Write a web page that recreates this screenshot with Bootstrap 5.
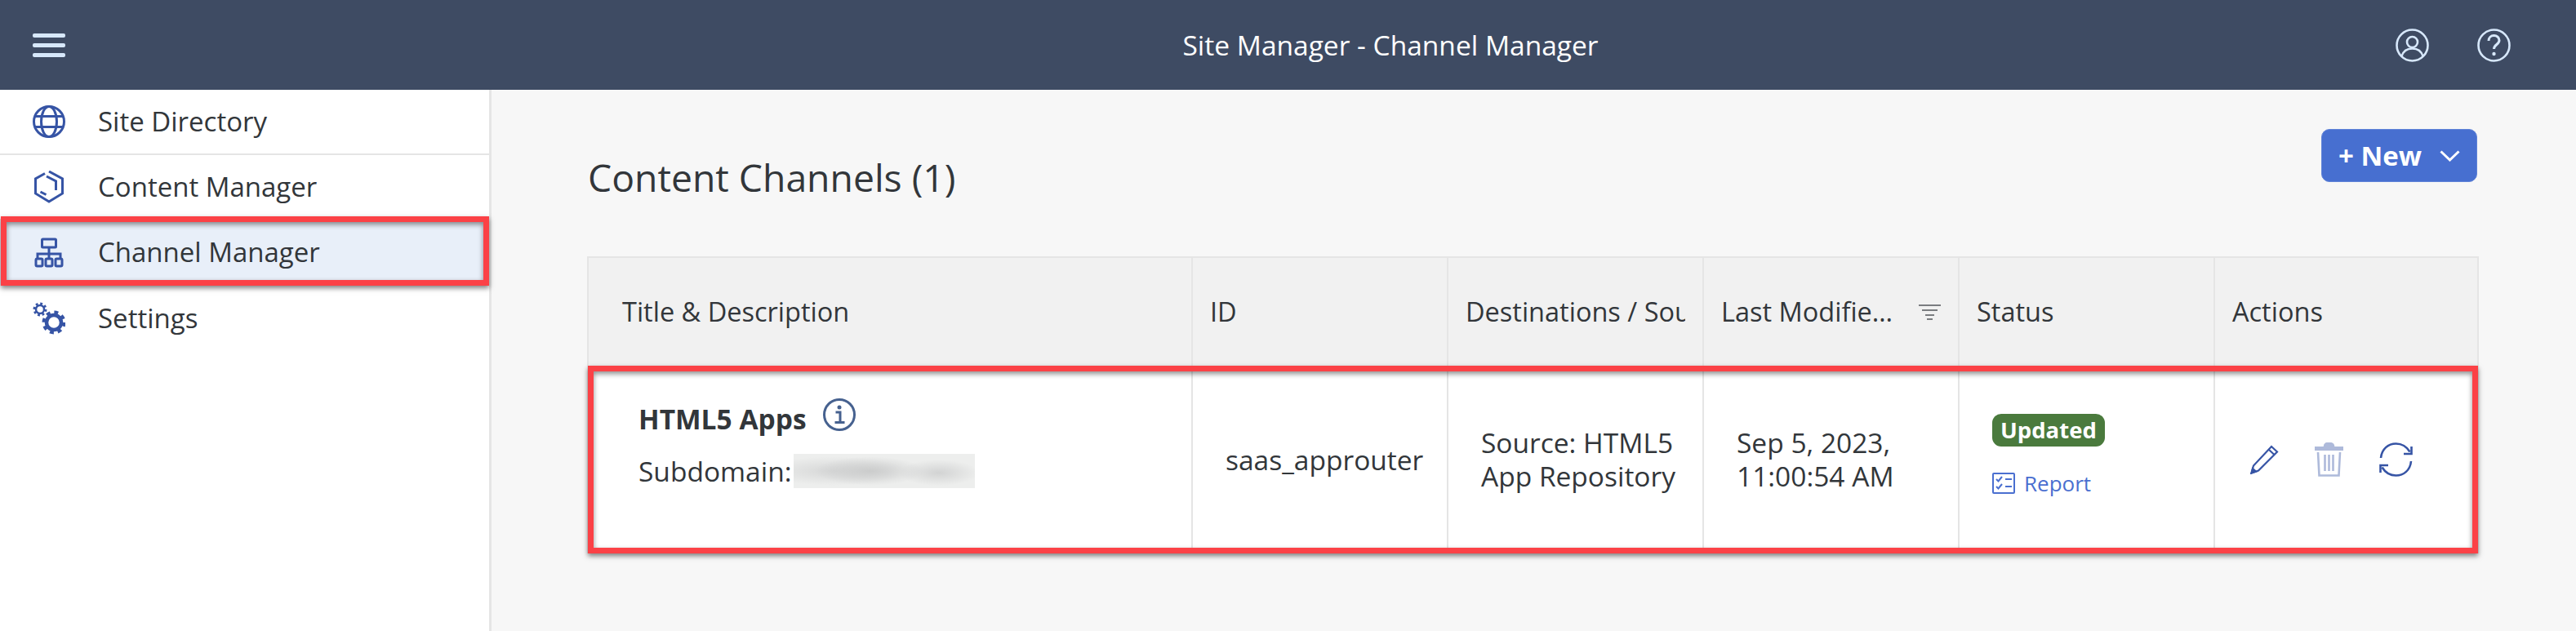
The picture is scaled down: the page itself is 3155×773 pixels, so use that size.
<!DOCTYPE html>
<html lang="en">
<head>
  <meta charset="UTF-8">
  <meta name="viewport" content="width=device-width, initial-scale=1.0">
  <title>Site Manager - Channel Manager</title>
  <link href="https://cdn.jsdelivr.net/npm/bootstrap@5.3.0/dist/css/bootstrap.min.css" rel="stylesheet">
  <style>
    html, body { height: 100%; }
    body { background: #f7f7f7; color: #32363a; font-family: "Open Sans", "Liberation Sans", sans-serif; font-size: 33px; overflow: hidden; }
    .shell-bar { height: 110px; background: #3e4b63; padding: 0; color: #fff; flex-wrap: nowrap; }
    .shell-left { width: 600px; padding-left: 40px; }
    .shell-right { width: 349px; padding-right: 80px; gap: 59px; }
    .shell-title { font-size: 33.500px; color: #fff; }
    .shell-bar svg { display: block; }
    .page-body { height: 663px; }
    .side-nav { width: 602px; flex: none; background: #fff; border-right: 3px solid #e5e5e5; }
    .side-nav .list-group-item { height: 80px; padding: 0 0 0 40px; gap: 40px; border: 0; border-bottom: 2px solid #e5e5e5; border-radius: 0; color: #32363a; background: #fff; font-size: 33px; }
    .side-nav .list-group-item.active { background: #e8eff9; color: #32363a; margin: 0; position: relative; border-bottom-color: #e8eff9; }
    .side-nav .list-group-item.active::after { content: ""; position: absolute; left: 1px; right: 0; top: -5px; bottom: -2px; border: 7px solid #fb4146; box-shadow: 0 3px 6px rgba(0,0,0,.5), inset 0 3px 6px rgba(0,0,0,.45); }
    .side-nav svg { width: 40px; height: 40px; flex: none; }
    .blue-line { fill: none; stroke: #3654a5; stroke-width: 3; }
    .main-area { padding: 48px 121px 0 117px; }
    .head-row { height: 156px; }
    .page-heading { font-size: 46.300px; font-weight: 400; margin: 32px 0 0 1px; }
    .new-btn { width: 191px; height: 65px; background: #476fd0; border-color: #5f83d8; border-radius: 10px; color: #fff; font-size: 33px; font-weight: 700; padding: 0; gap: 22px; margin-right: 2px; }
    .channel-table { table-layout: fixed; width: 2315px; margin: 0; border: 2px solid #e5e5e5; border-bottom: 0; --bs-table-bg: transparent; color: #32363a; }
    .channel-table th, .channel-table td { border: 0; border-right: 2px solid #e5e5e5; }
    .channel-table th:last-child, .channel-table td:last-child { border-right: 0; }
    .channel-table thead th { height: 133px; background: #f1f1f1; font-weight: 400; font-size: 32.500px; padding: 0 21px; vertical-align: middle; white-space: nowrap; color: #32363a; }
    .channel-table thead th.head-first { padding-left: 41px; }
    .channel-table tbody td { background: #fff; height: 230px; padding: 7px 0; font-size: 33.500px; line-height: 41px; vertical-align: middle; color: #32363a; }
    .channel-table tbody tr { position: relative; }
    .channel-table tbody tr::after { content: ""; position: absolute; left: 0; right: 0; top: 0; bottom: 0; border: 7px solid #fb4146; box-shadow: 0 3px 6px rgba(0,0,0,.5), inset 0 3px 6px rgba(0,0,0,.45); pointer-events: none; }
    .w-title { width: 740px; } .w-mid { width: 313px; } .w-last { width: 323px; }
    .cell-title { padding-left: 61px !important; }
    .cell-id { padding-left: 40px !important; }
    .cell-src { padding-left: 40px !important; }
    .cell-status { padding-left: 40px !important; }
    .app-name { font-weight: 700; font-size: 33.500px; gap: 20px; margin-top: -40px; }
    .app-name svg { margin-bottom: 10px; }
    .subdomain { margin-top: 18px; gap: 2px; }
    .blur-box { width: 222px; height: 42px; background: radial-gradient(ellipse 30% 42% at 42% 50%, #cbcccc, transparent), radial-gradient(ellipse 22% 38% at 80% 55%, #d2d3d3, transparent), radial-gradient(ellipse 40% 42% at 22% 50%, #d6d7d7, transparent), #edeeed; }
    .head-clip { overflow: hidden; }
    .header-ellipsis { min-width: 0; overflow: hidden; text-overflow: ellipsis; }
    .state-tag { display: inline-block; background: #4a7a3d; border-radius: 11px; color: #fff; font-weight: 700; font-size: 27.500px; line-height: 40px; height: 40px; padding: 0 10px; position: relative; top: -12px; }
    .report-link { color: #4a6fd0; font-size: 26px; gap: 11px; margin-top: 18px; margin-bottom: 4px; text-decoration: none; line-height: 30px; }
    .act-row { padding-left: 43px; gap: 44px; }
    .act-row svg { display: block; }
    .muted-icon { opacity: .4; }
  </style>
</head>
<body>

<!-- Top bar -->
<nav class="navbar shell-bar d-flex align-items-center">
  <div class="shell-left">
    <svg width="40" height="29" viewBox="0 0 40 29" fill="#d7e8fb"><rect y="0" width="40" height="5" rx="2"/><rect y="12" width="40" height="5" rx="2"/><rect y="24" width="40" height="5" rx="2"/></svg>
  </div>
  <div class="flex-fill text-center shell-title">Site Manager - Channel Manager</div>
  <div class="shell-right d-flex justify-content-end">
    <svg width="41" height="41" viewBox="0 0 41 41" fill="none" stroke="#d7e8fb" stroke-width="2.600"><circle cx="20.500" cy="20.500" r="19"/><circle cx="20.500" cy="16.500" r="6.500"/><path d="M7.500 34c2-7 7-9.500 13-9.500s11 2.500 13 9.500"/></svg>
    <svg width="41" height="41" viewBox="0 0 41 41" fill="none" stroke="#d7e8fb" stroke-width="2.600"><circle cx="20.500" cy="20.500" r="19"/><path d="M14 15c0-4 3-6.500 6.500-6.500S27 11 27 14.500c0 5-6.500 5-6.500 10.500" stroke-width="3"/><circle cx="20.500" cy="31" r="2.200" fill="#d7e8fb" stroke="none"/></svg>
  </div>
</nav>

<div class="page-body d-flex">
  <!-- Sidebar -->
  <aside class="side-nav">
    <div class="list-group list-group-flush">
      <a class="list-group-item d-flex align-items-center" href="#">
        <svg viewBox="0 0 40 40" class="blue-line"><circle cx="20" cy="20" r="18.500"/><ellipse cx="20" cy="20" rx="9.500" ry="18.500"/><path d="M3 13.500h34M3 26.500h34"/></svg>
        <span>Site Directory</span>
      </a>
      <a class="list-group-item d-flex align-items-center" href="#">
        <svg viewBox="0 0 40 40" class="blue-line" stroke-width="2.600"><path d="M15 3.500 3.500 10v18L20 38l16.500-10V10L20 1"/><path d="M17 7l11.500 6v11"/><path d="M9.500 26l7 3.500"/></svg>
        <span>Content Manager</span>
      </a>
      <a class="list-group-item active d-flex align-items-center" href="#">
        <svg viewBox="0 0 40 40" class="blue-line"><rect x="11.500" y="4" width="17" height="10" rx="1"/><path d="M20 14v14M6 28v-6h28v6M20 22v6"/><rect x="4" y="28" width="8" height="9" rx="1.500"/><rect x="16" y="28" width="8" height="9" rx="1.500"/><rect x="28" y="28" width="8" height="9" rx="1.500"/></svg>
        <span>Channel Manager</span>
      </a>
      <a class="list-group-item d-flex align-items-center" href="#">
        <svg viewBox="0 0 40 40" class="blue-line"><circle cx="9" cy="9" r="5" stroke-width="2.500"/><circle cx="9" cy="9" r="7" stroke-width="3" stroke-dasharray="2.750 2.750"/><circle cx="26" cy="25" r="9" stroke-width="4.500"/><circle cx="26" cy="25" r="12.500" stroke-width="4" stroke-dasharray="4.900 4.920"/></svg>
        <span>Settings</span>
      </a>
    </div>
  </aside>

  <!-- Content -->
  <main class="main-area flex-fill">
    <div class="head-row d-flex justify-content-between align-items-start">
      <h1 class="page-heading">Content Channels (1)</h1>
      <button class="btn new-btn d-flex align-items-center justify-content-center" type="button">
        <span>+ New</span>
        <svg width="25" height="14" viewBox="0 0 25 14" fill="none" stroke="#fff" stroke-width="3"><path d="M1.500 1.500 12.500 12l11-10.500"/></svg>
      </button>
    </div>

    <table class="table channel-table">
      <colgroup><col class="w-title"><col class="w-mid"><col class="w-mid"><col class="w-mid"><col class="w-mid"><col class="w-last"></colgroup>
      <thead>
        <tr>
          <th class="head-first">Title &amp; Description</th>
          <th>ID</th>
          <th><div class="head-clip">Destinations / Source</div></th>
          <th>
            <div class="d-flex align-items-center gap-4">
              <span class="header-ellipsis">Last Modified On</span>
              <svg width="27" height="19" viewBox="0 0 27 19" class="flex-shrink-0" fill="#7a7d80"><rect width="27" height="2"/><rect x="4" y="6" width="19" height="2"/><rect x="8" y="12" width="11" height="2"/><rect x="10" y="17" width="7" height="2"/></svg>
            </div>
          </th>
          <th>Status</th>
          <th>Actions</th>
        </tr>
      </thead>
      <tbody>
        <tr>
          <td class="cell-title">
            <div class="app-name d-flex align-items-center">
              <span>HTML5 Apps</span>
              <svg width="40" height="40" viewBox="0 0 40 40" fill="none"><circle cx="20" cy="20" r="18.500" stroke="#46618f" stroke-width="3"/><circle cx="20" cy="11" r="2.500" fill="#46618f"/><path d="M15.500 17h5.500v12M14.500 29.500h12" stroke="#46618f" stroke-width="3"/></svg>
            </div>
            <div class="subdomain d-flex align-items-center">
              <span>Subdomain:</span>
              <span class="blur-box"></span>
            </div>
          </td>
          <td class="cell-id">saas_approuter</td>
          <td class="cell-src">Source: HTML5<br>App Repository</td>
          <td class="cell-src">Sep 5, 2023,<br>11:00:54 AM</td>
          <td class="cell-status">
            <div><span class="state-tag">Updated</span></div>
            <a class="report-link d-flex align-items-center" href="#">
              <svg width="28" height="26" viewBox="0 0 28 26" fill="none" stroke="#4a6fd0" stroke-width="2"><rect x="1" y="1" width="26" height="24" rx="1"/><path d="M5 8l2.500 2.500L12 5M5 17l2.500 2.500L12 14M16 8h8M16 17h8"/></svg>
              <span>Report</span>
            </a>
          </td>
          <td>
            <div class="act-row d-flex align-items-center">
              <svg width="35" height="36" viewBox="0 0 35 36" fill="none" stroke="#3654a5" stroke-width="2.200"><path d="M1.500 34.500l2.500-9L26 2l7 6.500L10 31.500z"/><path d="M22.500 5.500l7 6.500"/><path d="M1.500 34.500l1.500-5.500 4 3.500z" fill="#3654a5"/></svg>
              <svg class="muted-icon" width="35" height="42" viewBox="0 0 35 42" fill="none" stroke="#3654a5" stroke-width="2.600"><path d="M0 7.500h35" stroke-width="5"/><path d="M12 5c0-3 2-4 5.500-4S23 2 23 5" fill="#3654a5"/><path d="M4 12l1.500 28.500h24L31 12M12.500 15v20M17.500 15v20M22.500 15v20"/></svg>
              <svg width="41" height="42" viewBox="0 0 41 42" fill="none" stroke="#3654a5" stroke-width="2.600"><path d="M2 19C3 8 11 1.500 20.500 1.500c7 0 13 3.500 17 10"/><path d="M39.500 5v9H30"/><path d="M39 23c-1 11-9 17.500-18.500 17.500-7 0-13-3.500-17-10"/><path d="M1.500 37v-9H11"/></svg>
            </div>
          </td>
        </tr>
      </tbody>
    </table>
  </main>
</div>

<script src="https://cdn.jsdelivr.net/npm/bootstrap@5.3.0/dist/js/bootstrap.bundle.min.js"></script>
</body>
</html>
